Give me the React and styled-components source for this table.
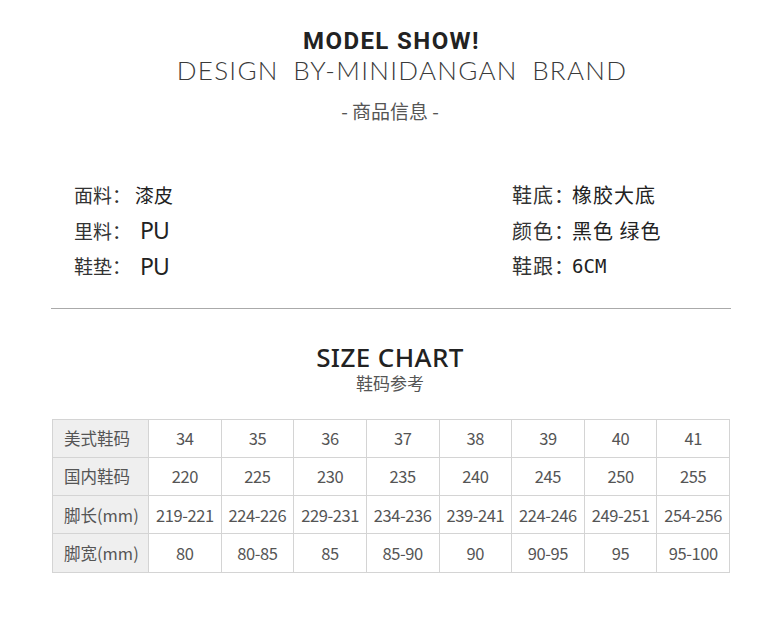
import React from 'react';
import styled, { createGlobalStyle } from 'styled-components';

const GlobalStyle = createGlobalStyle`
  body {
    margin: 0;
    background: #fff;
  }
`;

const Page = styled.div`
  width: 780px;
  height: 642px;
  background: #fff;
  overflow: hidden;
  font-family: "Noto Sans CJK SC", "Noto Sans", sans-serif;
  color: #333;
`;

const Header = styled.header`
  display: flex;
  flex-direction: column;
  align-items: center;
  padding-top: 26px;
`;

const Title = styled.h1`
  margin: 0 0 0 3px;
  font-family: "Roboto", "Noto Sans", sans-serif;
  font-weight: 700;
  font-size: 24px;
  line-height: 30px;
  color: #222;
  letter-spacing: 1.4px;
`;

const Subtitle = styled.div`
  margin-left: 24px;
  font-family: "Lato", "Noto Sans", sans-serif;
  font-weight: 300;
  font-size: 26px;
  line-height: 28px;
  letter-spacing: 1.3px;
  word-spacing: 6px;
  color: #3a3a3a;
`;

const Caption = styled.div`
  margin-top: 14px;
  font-size: 19px;
  line-height: 26px;
  color: #555;
`;

const Specs = styled.section`
  display: flex;
  padding-left: 74px;
  margin-top: 53px;
`;

const SpecList = styled.dl`
  margin: 0;
  width: ${p => p.$width}px;
  display: grid;
  grid-template-columns: ${p => p.$labelWidth}px auto;
  grid-auto-rows: 35.5px;
  align-items: center;
  letter-spacing: ${p => p.$spacing}px;
  font-size: ${p => p.$size}px;
`;

const Label = styled.dt`
  color: #333;
  white-space: nowrap;
`;

const Value = styled.dd`
  margin: 0;
  color: #222;
  white-space: nowrap;
  ${p => p.$mono && `
    font-family: "DejaVu Sans Mono", monospace;
    font-size: 19px;
    letter-spacing: 0;
  `}
  ${p => p.$latin && `
    font-family: "Noto Sans", sans-serif;
    font-size: 23px;
    letter-spacing: -1px;
    padding-left: 5px;
  `}
`;

const Divider = styled.hr`
  margin: 24px 0 0 51px;
  width: 680px;
  border: none;
  border-top: 1.5px solid #aaa;
`;

const ChartHead = styled.div`
  display: flex;
  flex-direction: column;
  align-items: center;
  margin-top: 33px;
`;

const ChartTitle = styled.h2`
  margin: 0;
  font-family: "Noto Sans", sans-serif;
  font-weight: 500;
  font-size: 26px;
  line-height: 31px;
  letter-spacing: 0.4px;
  color: #222;
`;

const ChartSub = styled.div`
  font-size: 17px;
  line-height: 20px;
  color: #555;
`;

const Table = styled.table`
  margin: 26px 0 0 52px;
  width: 678px;
  border-collapse: collapse;
  table-layout: fixed;
  font-size: 16.5px;
  color: #555;
`;

const Cell = styled.td`
  height: 37.25px;
  padding: 0;
  border: 1px solid #d4d4d4;
  text-align: center;
  letter-spacing: -0.4px;
  ${p => p.$head && `
    width: 84px;
    background: #efefef;
    text-align: left;
    padding-left: 11px;
    letter-spacing: 0;
  `}
`;

const left = [
  { label: '面料：', value: '漆皮' },
  { label: '里料：', value: 'PU', latin: true },
  { label: '鞋垫：', value: 'PU', latin: true },
];

const right = [
  { label: '鞋底：', value: '橡胶大底' },
  { label: '颜色：', value: '黑色 绿色' },
  { label: '鞋跟：', value: '6CM', mono: true },
];

const rows = [
  ['美式鞋码', '34', '35', '36', '37', '38', '39', '40', '41'],
  ['国内鞋码', '220', '225', '230', '235', '240', '245', '250', '255'],
  ['脚长(mm)', '219-221', '224-226', '229-231', '234-236', '239-241', '224-246', '249-251', '254-256'],
  ['脚宽(mm)', '80', '80-85', '85', '85-90', '90', '90-95', '95', '95-100'],
];

const App = () => (
  <Page>
    <GlobalStyle />
    <Header>
      <Title>MODEL SHOW!</Title>
      <Subtitle>DESIGN BY-MINIDANGAN BRAND</Subtitle>
      <Caption>- 商品信息 -</Caption>
    </Header>

    <Specs>
      <SpecList $width={438} $labelWidth={61} $size={19} $spacing={0}>
        {left.map(item => (
          <React.Fragment key={item.label}>
            <Label>{item.label}</Label>
            <Value $latin={item.latin}>{item.value}</Value>
          </React.Fragment>
        ))}
      </SpecList>
      <SpecList $width={220} $labelWidth={60} $size={20} $spacing={1}>
        {right.map(item => (
          <React.Fragment key={item.label}>
            <Label>{item.label}</Label>
            <Value $mono={item.mono}>{item.value}</Value>
          </React.Fragment>
        ))}
      </SpecList>
    </Specs>

    <Divider />

    <ChartHead>
      <ChartTitle>SIZE CHART</ChartTitle>
      <ChartSub>鞋码参考</ChartSub>
    </ChartHead>

    <Table>
      <tbody>
        {rows.map(row => (
          <tr key={row[0]}>
            {row.map((cell, i) => (
              <Cell key={i} $head={i === 0}>{cell}</Cell>
            ))}
          </tr>
        ))}
      </tbody>
    </Table>
  </Page>
);

export default App;
